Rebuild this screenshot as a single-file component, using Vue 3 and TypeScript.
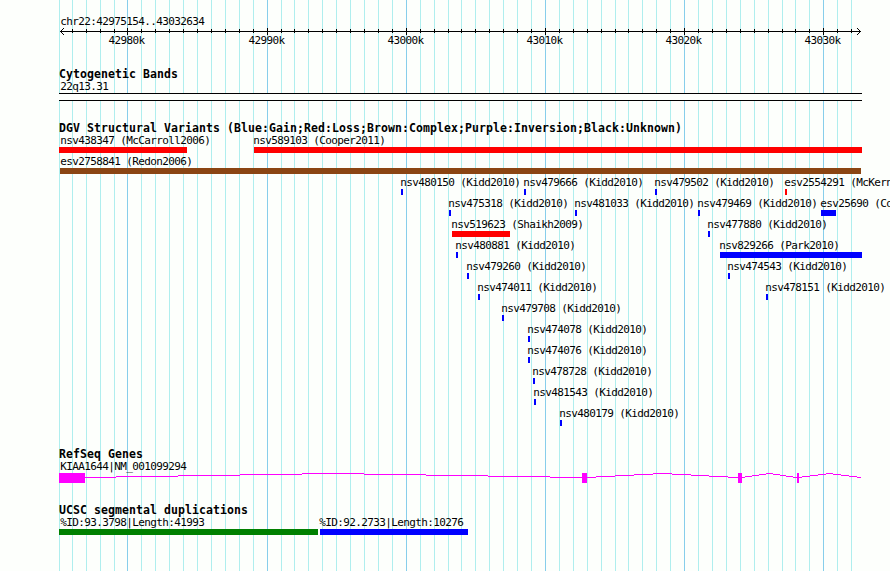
<template>
  <div class="browser">
    <svg class="grid" width="890" height="571">
      <rect class="minor" x="59" y="0" width="1" height="571" />
      <rect
        v-for="t in ticks"
        :key="t.kb"
        :class="t.major ? 'major' : 'minor'"
        :x="t.x"
        y="0"
        width="1"
        height="571"
      />
    </svg>

    <svg class="ruler" width="890" height="67">
      <text x="60.2" y="25">chr22:42975154..43032634</text>
      <rect x="60" y="31" width="801" height="1" />
      <path class="arrow" d="M63.5 28.5L60.5 31.5L63.5 34.5M857.5 28.5L860.5 31.5L857.5 34.5" />
      <g v-for="t in ticks" :key="t.kb">
        <rect :x="t.x" :y="t.major ? 28 : 29" width="1" :height="t.major ? 7 : 4" />
        <text v-if="t.major" :x="t.x - 18.5" y="44">{{ t.kb }}k</text>
      </g>
    </svg>

    <section>
      <h2>Cytogenetic Bands</h2>
      <svg width="890" height="40">
        <text x="60.2" y="9">22q13.31</text>
        <rect class="band" x="59" y="13" width="803" height="6" />
        <rect x="59" y="12" width="803" height="1" />
        <rect x="59" y="19" width="803" height="1" />
      </svg>
    </section>

    <section class="variants">
      <h2>DGV Structural Variants (Blue:Gain;Red:Loss;Brown:Complex;Purple:Inversion;Black:Unknown)</h2>
      <svg width="890" height="294">
        <g v-for="v in variants" :key="v.name">
          <text :x="labelX(v.x)" :y="v.row * 21 + 9">{{ v.name }}</text>
          <rect :class="v.type" :x="v.x" :y="v.row * 21 + 12" :width="v.w" height="6" />
        </g>
      </svg>
    </section>

    <section>
      <h2>RefSeq Genes</h2>
      <svg width="890" height="42">
        <text x="60.2" y="9">KIAA1644|NM_001099294</text>
        <rect
          v-for="s in intronSteps"
          :key="s.x"
          class="gene"
          :x="s.x"
          :y="s.y"
          :width="s.w"
          height="1"
        />
        <rect
          v-for="e in exons"
          :key="e.x"
          class="gene"
          :x="e.x"
          y="12"
          :width="e.w"
          height="10"
        />
      </svg>
    </section>

    <section>
      <h2>UCSC segmental duplications</h2>
      <svg width="890" height="54">
        <g v-for="d in duplications" :key="d.name">
          <text :x="labelX(d.x)" y="9">{{ d.name }}</text>
          <rect :class="d.type" :x="d.x" y="12" :width="d.w" height="6" />
        </g>
      </svg>
    </section>
  </div>
</template>

<script setup lang="ts">
interface Tick {
  kb: number;
  x: number;
  major: boolean;
}

interface Feature {
  name: string;
  x: number;
  w: number;
  type: string;
}

interface Variant extends Feature {
  row: number;
}

// region shown, in bases
const start = 42975154;
const end = 43032634;
const scale = 800 / (end - start + 1);

const ticks: Tick[] = [];
for (let kb = 42976; kb <= 43032; kb++) {
  ticks.push({
    kb,
    x: Math.round(60 + (kb * 1000 - start) * scale),
    major: kb % 10 === 0,
  });
}

const labelX = (x: number) => Math.max(60, x - 1) + 0.2;

const variants: Variant[] = [
  { name: "nsv438347 (McCarroll2006)", row: 0, x: 59, w: 128, type: "loss" },
  { name: "nsv589103 (Cooper2011)", row: 0, x: 254, w: 608, type: "loss" },
  { name: "esv2758841 (Redon2006)", row: 1, x: 60, w: 801, type: "complex" },
  { name: "nsv480150 (Kidd2010)", row: 2, x: 401, w: 2, type: "gain" },
  { name: "nsv479666 (Kidd2010)", row: 2, x: 524, w: 2, type: "gain" },
  { name: "nsv479502 (Kidd2010)", row: 2, x: 655, w: 2, type: "gain" },
  { name: "esv2554291 (McKern", row: 2, x: 785, w: 2, type: "loss" },
  { name: "nsv475318 (Kidd2010)", row: 3, x: 449, w: 2, type: "gain" },
  { name: "nsv481033 (Kidd2010)", row: 3, x: 575, w: 2, type: "gain" },
  { name: "nsv479469 (Kidd2010)", row: 3, x: 698, w: 2, type: "gain" },
  { name: "esv25690 (Co", row: 3, x: 821, w: 15, type: "gain" },
  { name: "nsv519623 (Shaikh2009)", row: 4, x: 452, w: 58, type: "loss" },
  { name: "nsv477880 (Kidd2010)", row: 4, x: 708, w: 2, type: "gain" },
  { name: "nsv480881 (Kidd2010)", row: 5, x: 456, w: 2, type: "gain" },
  { name: "nsv829266 (Park2010)", row: 5, x: 720, w: 142, type: "gain" },
  { name: "nsv479260 (Kidd2010)", row: 6, x: 467, w: 2, type: "gain" },
  { name: "nsv474543 (Kidd2010)", row: 6, x: 728, w: 2, type: "gain" },
  { name: "nsv474011 (Kidd2010)", row: 7, x: 478, w: 2, type: "gain" },
  { name: "nsv478151 (Kidd2010)", row: 7, x: 766, w: 2, type: "gain" },
  { name: "nsv479708 (Kidd2010)", row: 8, x: 502, w: 2, type: "gain" },
  { name: "nsv474078 (Kidd2010)", row: 9, x: 528, w: 2, type: "gain" },
  { name: "nsv474076 (Kidd2010)", row: 10, x: 528, w: 2, type: "gain" },
  { name: "nsv478728 (Kidd2010)", row: 11, x: 533, w: 2, type: "gain" },
  { name: "nsv481543 (Kidd2010)", row: 12, x: 534, w: 2, type: "gain" },
  { name: "nsv480179 (Kidd2010)", row: 13, x: 560, w: 2, type: "gain" },
];

const exons = [
  { x: 59, w: 26 },
  { x: 582, w: 5 },
  { x: 738, w: 4 },
  { x: 797, w: 2 },
];

// each intron rises four pixels and falls back, one pixel per step
const introns = [
  [85, 116, 178, 240, 302, 364, 426, 488, 550, 582],
  [587, 596, 615, 634, 653, 672, 691, 709, 728, 738],
  [742, 745, 752, 759, 766, 773, 780, 786, 793, 797],
  [799, 802, 810, 818, 826, 833, 841, 849, 857, 861],
];

const intronSteps = introns.flatMap((edges) =>
  edges.slice(0, -1).map((x, i) => ({
    x,
    y: 12 + Math.abs(i - 4),
    w: edges[i + 1] - x,
  }))
);

const duplications: Feature[] = [
  { name: "%ID:93.3798|Length:41993", x: 59, w: 259, type: "dup-low" },
  { name: "%ID:92.2733|Length:10276", x: 320, w: 148, type: "gain" },
];
</script>

<style>
body {
  margin: 0;
  background: #fdfffc;
}
</style>

<style scoped>
.browser {
  position: relative;
  width: 890px;
  height: 571px;
  overflow: hidden;
  background: #fdfffc;
  color: #000;
  font-family: "DejaVu Sans Mono", "Liberation Mono", monospace;
}
svg {
  display: block;
  position: relative;
  shape-rendering: crispEdges;
}
.grid {
  position: absolute;
  top: 0;
  left: 0;
}
.minor {
  fill: #afeeee;
}
.major {
  fill: #87ceeb;
}
text {
  font-size: 11px;
  letter-spacing: -0.622px;
  white-space: pre;
}
h2 {
  position: relative;
  margin: 0;
  padding-left: 59px;
  height: 14px;
  font-size: 11.5px;
  font-weight: bold;
  line-height: 14px;
  letter-spacing: 0.077px;
  white-space: nowrap;
}
.variants {
  padding-bottom: 18px;
}
.arrow {
  fill: none;
  stroke: #000;
  stroke-width: 1;
  stroke-linecap: square;
}
.band {
  fill: #fdfffc;
}
.loss {
  fill: #ff0000;
}
.gain {
  fill: #0000ff;
}
.complex {
  fill: #8b4513;
}
.gene {
  fill: #ff00ff;
}
.dup-low {
  fill: #008000;
}
</style>
